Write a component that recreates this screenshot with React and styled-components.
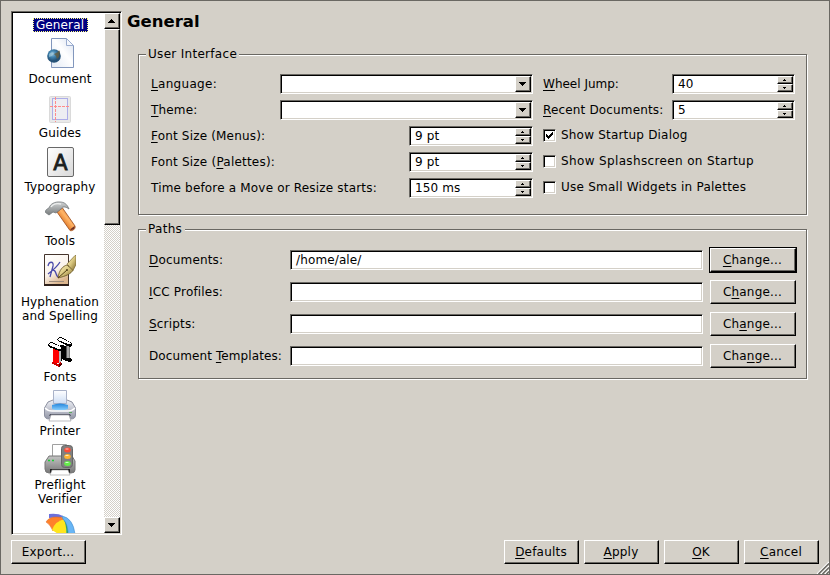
import React from 'react';
import styled, { createGlobalStyle, css } from 'styled-components';

const face = '#d4d0c8';
const shade = '#6a6863';

const Global = createGlobalStyle`
  * { box-sizing: border-box; }
  body { margin: 0; background: ${face}; }
  button, input { font: inherit; letter-spacing: inherit; color: inherit; }
  u {
    text-decoration: underline 1px;
    text-underline-offset: 2px;
    text-decoration-skip-ink: none;
  }
`;

const sunken = css`
  border: 1px solid;
  border-color: ${shade} #fff #fff ${shade};
  box-shadow: inset 1px 1px 0 #000, inset -1px -1px 0 ${face};
`;

const raised = css`
  background: ${face};
  border: 1px solid;
  border-color: #fff #000 #000 #fff;
  box-shadow: inset -1px -1px 0 ${shade};
`;

const Dialog = styled.div`
  position: relative;
  display: flex;
  flex-direction: column;
  width: 830px;
  height: 575px;
  padding: 10px;
  gap: 5px;
  border: 1px solid ${shade};
  background: ${face};
  color: #000;
  font: 12px/14px 'DejaVu Sans', sans-serif;
  letter-spacing: 0.13px;
  white-space: nowrap;
  overflow: hidden;
`;

const Body = styled.div`
  display: flex;
  height: 524px;
  gap: 5px;
`;

const Sidebar = styled.div`
  ${sunken}
  display: flex;
  width: 111px;
  padding: 1px;
  background: #fff;
`;

const SectionList = styled.div`
  flex: 1;
  display: flex;
  flex-direction: column;
  align-items: center;
  gap: 6px;
  padding: 5px 0 0 3px;
  overflow: hidden;
`;

const Section = styled.div`
  display: flex;
  flex-direction: column;
  align-items: center;
  flex: none;
  gap: ${(p) => p.$gap || 2}px;
  margin-bottom: ${(p) => p.$after || 0}px;
  text-align: center;
  svg { display: block; }
`;

const Selected = styled.span`
  flex: none;
  width: 55px;
  height: 14px;
  line-height: 14px;
  text-align: center;
  background: #000080;
  color: #fff;
  outline: 1px dotted #ffff7f;
  outline-offset: -1px;
`;

const Scrollbar = styled.div`
  display: flex;
  flex-direction: column;
  width: 16px;
  background: repeating-conic-gradient(${face} 0 25%, #fff 0 50%) 0 0 / 2px 2px;
`;

const ScrollButton = styled.div`
  ${raised}
  display: flex;
  align-items: center;
  justify-content: center;
  height: 16px;
  padding-right: 1px;
`;

const Thumb = styled.div`
  ${raised}
  height: 196px;
`;

const Spacer = styled.div`
  flex: 1;
`;

const Main = styled.main`
  flex: 1;
  display: flex;
  flex-direction: column;
`;

const Title = styled.h1`
  margin: 0;
  height: 43px;
  padding-top: 1px;
  font-size: 16.5px;
  line-height: 20px;
  font-weight: bold;
  letter-spacing: 0;
`;

const Group = styled.section`
  width: 669px;
  height: ${(p) => p.$height}px;
  margin: 0 0 14px 11px;
  padding: 0 0 0 ${(p) => p.$inset}px;
  border: 1px solid ${shade};
  box-shadow: inset 1px 1px 0 #fff, 1px 1px 0 #fff;
`;

const Legend = styled.h2`
  width: ${(p) => p.$width}px;
  height: 14px;
  margin: -8px 0 ${(p) => p.$gap}px ${(p) => p.$shift}px;
  padding-left: 2px;
  background: ${face};
  font: inherit;
  letter-spacing: 0.3px;
`;

const Columns = styled.div`
  display: grid;
  grid-template-columns: 382px 252px;
  column-gap: 10px;
`;

const Rows = styled.div`
  display: flex;
  flex-direction: column;
  gap: 6px;
`;

const Row = styled.div`
  display: flex;
  align-items: center;
  justify-content: space-between;
  height: 20px;
`;

const Label = styled.label`
  letter-spacing: ${(p) => p.$track ?? 0.18}px;
`;

const Field = styled.div`
  ${sunken}
  display: flex;
  justify-content: space-between;
  width: ${(p) => p.$width}px;
  height: 20px;
  padding: 1px 1px 1px 5px;
  line-height: 17px;
  background: #fff;
`;

const DropButton = styled.div`
  ${raised}
  display: flex;
  align-items: center;
  justify-content: center;
  width: 16px;
  height: 16px;
  padding-right: 1px;
`;

const Stepper = styled.div`
  display: flex;
  flex-direction: column;
  width: 16px;
  height: 16px;
`;

const Step = styled.div`
  ${raised}
  display: flex;
  align-items: center;
  justify-content: center;
  height: 8px;
  padding-right: 1px;
`;

const CheckRow = styled.label`
  display: flex;
  align-items: center;
  gap: 5px;
  height: 20px;
  padding-bottom: 1px;
  letter-spacing: ${(p) => p.$track ?? 0.2}px;
`;

const CheckText = styled.span`
  margin-bottom: 1px;
`;

const CheckBox = styled.span`
  ${sunken}
  width: 13px;
  height: 13px;
  background: #fff;
  svg { display: block; margin: 2px; }
`;

const PathGrid = styled.div`
  display: grid;
  grid-template-columns: 141px 413px 86px;
  grid-auto-rows: 24px;
  row-gap: 8px;
  align-items: center;
`;

const PathButtonCell = styled.div`
  margin-left: 7px;
`;

const Button = styled.button`
  ${raised}
  width: ${(p) => p.$width || 75}px;
  height: 24px;
  padding: 0 1px 1px 0;
  line-height: 14px;
  letter-spacing: 0.2px;
  ${(p) => p.$default && css`
    box-shadow: inset -1px -1px 0 ${shade}, 0 0 0 1px #000;
  `}
`;

const Footer = styled.footer`
  display: flex;
  justify-content: space-between;
`;

const Actions = styled.div`
  display: flex;
  gap: 5px;
`;

const SizeGrip = styled.svg`
  position: absolute;
  right: 0;
  bottom: 0;
`;

const Arrow = ({ up }) => (
  <svg width="7" height="4" shapeRendering="crispEdges">
    <path d={up ? 'M3 0h1v1h1v1h1v1h1v1H0V3h1V2h1V1h1z' : 'M0 0h7v1H6v1H5v1H4v1H3V3H2V2H1V1H0z'} />
  </svg>
);

const Tick = ({ up }) => (
  <svg width="3" height="2" shapeRendering="crispEdges">
    <path d={up ? 'M1 0h1v1h1v1H0V1h1z' : 'M0 0h3v1H2v1H1V1H0z'} />
  </svg>
);

const CheckMark = () => (
  <svg width="7" height="7" shapeRendering="crispEdges">
    <path d="M0 2h1v1h1v1h1V3h1V2h1V1h1V0h1v3H6v1H5v1H4v1H3v1H2V6H1V5H0z" />
  </svg>
);

const Spin = ({ value, width }) => (
  <Field $width={width}>
    {value}
    <Stepper>
      <Step><Tick up /></Step>
      <Step><Tick /></Step>
    </Stepper>
  </Field>
);

const Combo = () => (
  <Field $width={253}>
    <span />
    <DropButton><Arrow /></DropButton>
  </Field>
);

const Icon = ({ children }) => <svg width="32" height="32" viewBox="0 0 32 32">{children}</svg>;

const DocumentIcon = () => (
  <Icon>
    <defs>
      <linearGradient id="sheet" x1="0" y1="1" x2="1" y2="0">
        <stop offset="0" stopColor="#e2eaf5" /><stop offset=".55" stopColor="#fff" /><stop offset="1" stopColor="#d7e0ef" />
      </linearGradient>
      <radialGradient id="globe" cx=".4" cy=".35">
        <stop offset="0" stopColor="#8fc0dc" /><stop offset=".5" stopColor="#3f82ae" /><stop offset="1" stopColor="#255277" />
      </radialGradient>
    </defs>
    <path d="M7.500 .5h15l7 7v22h-22z" fill="url(#sheet)" stroke="#8297bd" />
    <path d="M22.500 .5v7h7z" fill="#f4f7fc" stroke="#9badd0" />
    <circle cx="10" cy="18" r="6.800" fill="url(#globe)" />
    <path d="M10 16l4-2 1-2 1 2-1 5-2 2-1-3z" fill="#655d3d" opacity=".8" />
    <path d="M5 16q3-3 5-1l-2 3-3 1z" fill="#a7cddb" opacity=".65" />
  </Icon>
);

const GuidesIcon = () => (
  <Icon>
    <rect x="5.500" y="4.500" width="21" height="26" rx="1" fill="#e9e9e9" stroke="#dadada" />
    <rect x="8.500" y="6.500" width="15" height="21" fill="#ededf2" stroke="#adade8" />
    <path d="M11.500 5v25M6 14.500h20" stroke="#ff8b8b" strokeDasharray="3 1" fill="none" />
  </Icon>
);

const TypographyIcon = () => (
  <Icon>
    <defs>
      <linearGradient id="tile" x2="1" y2="1"><stop stopColor="#fff" /><stop offset="1" stopColor="#d8d8d8" /></linearGradient>
    </defs>
    <rect x="3.500" y="1.500" width="26" height="29" rx="1.500" fill="url(#tile)" stroke="#686868" />
    <text x="16.500" y="24" textAnchor="middle" fontFamily="DejaVu Sans" fontSize="21" fill="#1b1e20" stroke="#1b1e20" strokeWidth=".8" letterSpacing="0">A</text>
  </Icon>
);

const ToolsIcon = () => (
  <Icon>
    <defs>
      <linearGradient id="handle" x1="0" y1="1" x2="1" y2="0"><stop offset=".3" stopColor="#d96b18" /><stop offset=".55" stopColor="#ffb466" /><stop offset="1" stopColor="#c9560d" /></linearGradient>
      <linearGradient id="steel" x2="0" y2="1"><stop stopColor="#d0d3d4" /><stop offset="1" stopColor="#777b7c" /></linearGradient>
    </defs>
    <path d="M13 12l5.500-4L31 26c1 3-3 5.500-5 4.500z" fill="url(#handle)" stroke="#9a4a1a" strokeWidth=".8" />
    <path d="M26 29.500l4.500-3.500c1 2.500-2 5-4.500 3.500z" fill="#6d2f24" />
    <path d="M1.500 12.500C1 10 3 9 5 8c1-4 6-6.500 11-6 4 0 7 2 9 7-4-3-7-2.500-8 0l-5 4-3-1-4 3z" fill="url(#steel)" stroke="#74797b" strokeWidth=".8" />
    <path d="M7 7c2-3 6-4 10-3" fill="none" stroke="#eceeee" strokeWidth="1.300" />
  </Icon>
);

const HyphenationIcon = () => (
  <Icon>
    <defs>
      <linearGradient id="paper" x2=".5" y2="1"><stop stopColor="#fff" /><stop offset=".6" stopColor="#faf3eb" /><stop offset="1" stopColor="#dcb68e" /></linearGradient>
      <linearGradient id="nib" x2="1" y2="1"><stop stopColor="#fff4c0" /><stop offset=".5" stopColor="#d8c67e" /><stop offset="1" stopColor="#7d672c" /></linearGradient>
    </defs>
    <path d="M.5 .5h24v30H.5z" fill="url(#paper)" stroke="#45352d" />
    <path d="M0 31h25" stroke="#2f211b" strokeWidth="2" />
    <path d="M4 12c1-5 6-5 5 0L6 23M16 8C13 13 8 17 4 20M9 16c4 0 2 7 6 7" fill="none" stroke="#4a4aaa" strokeWidth="1.300" />
    <path d="M5 27.500h15" stroke="#9d8c7c" />
    <path d="M14 24c1-8 5-12 9-13l6 5c-2 4-7 6-15 8z" fill="url(#nib)" stroke="#65521f" strokeWidth=".8" />
    <path d="M23 10l8-8.500h1v9l-3 6z" fill="url(#nib)" stroke="#7b6930" strokeWidth=".7" />
    <path d="M14 24l9-8" stroke="#514018" />
    <circle cx="23" cy="16" r="1" fill="#54431b" />
  </Icon>
);

const FontsIcon = () => (
  <Icon>
    <g shapeRendering="crispEdges">
      <path d="M16 9h2l4 1v12h-4l-1-3z" fill="#000" />
      <path d="M22 9h3v13h-3z" fill="#aaa" stroke="#000" strokeWidth=".5" />
      <path d="M18 20l4 2h4l2 1v2l-3 1-7-3z" fill="#000" />
      <path d="M13 3l2-2h2l11 6v3l-2 1-12-6z" fill="#000" />
      <path d="M15 2h2l10 5v1h-3L14 4z" fill="#fff" />
      <path d="M9 11l6 3v13h-6z" fill="#f00" />
      <path d="M15 13h2v13l-2 1z" fill="#b9b9b9" />
      <path d="M17 14h1v11h-1z" fill="#000" />
      <path d="M8 26l7 2 1-2 2 1v2l-3 2-8-4z" fill="#d00000" />
      <path d="M15 28l3-1v2l-3 2z" fill="#500" />
      <path d="M4 8l2-2h2l10 5v4h-3L5 11z" fill="#000" />
      <path d="M6 7h2l9 4v2h-3L5 9z" fill="#fff" />
    </g>
  </Icon>
);

const PrinterIcon = () => (
  <Icon>
    <defs>
      <linearGradient id="body" x2="0" y2="1"><stop stopColor="#eef0f6" /><stop offset="1" stopColor="#9296a6" /></linearGradient>
      <linearGradient id="feed" x2="0" y2="1"><stop stopColor="#fff" /><stop offset="1" stopColor="#cdddf4" /></linearGradient>
      <linearGradient id="glow" x2="0" y2="1"><stop stopColor="#2485dc" /><stop offset="1" stopColor="#8cd2ff" /></linearGradient>
    </defs>
    <path d="M4 12l5-2h14l5 2 3.500 6v7q0 4-5 4h-21q-5 0-5-4v-7z" fill="url(#body)" stroke="#8c90a0" />
    <path d="M9.500 .5h13v13h-13z" fill="url(#feed)" stroke="#a9b2c8" />
    <path d="M8 15q8-3 16 0v4q-8 3-16 0z" fill="url(#glow)" />
    <path d="M1 18q3 3 7 3h16q4 0 7-3" fill="none" stroke="#fff" strokeWidth="1.500" />
    <path d="M6 24h20l1 2H5z" fill="#4d5060" />
    <path d="M7 25h18l2 6H5z" fill="#fff" stroke="#a0a0a8" strokeWidth=".7" />
    <path d="M25 22.500h3" stroke="#5ca75d" />
  </Icon>
);

const PreflightIcon = () => (
  <Icon>
    <defs>
      <linearGradient id="case" x2="0" y2="1"><stop stopColor="#c4c4c4" /><stop offset="1" stopColor="#777" /></linearGradient>
    </defs>
    <path d="M8.500 .5h14v14h-14z" fill="#fff" stroke="#a0a0a0" />
    <path d="M5 12h23l3 5v9q0 3-4 3H5q-4 0-4-4v-7z" fill="url(#case)" stroke="#777" />
    <path d="M6 25h20v4H6z" fill="#222" />
    <path d="M8 26h16l2 5H6z" fill="#fff" stroke="#999" strokeWidth=".6" />
    <path d="M4 16.500h2m2 0h2" stroke="#19cf32" strokeWidth="1.600" />
    <rect x="17.500" y="1.500" width="11" height="22" rx="3" fill="#808080" stroke="#666" />
    <ellipse cx="23.500" cy="6" rx="3.300" ry="2.500" fill="#ff4b35" />
    <ellipse cx="23.500" cy="12.500" rx="3.300" ry="2.500" fill="#ffb431" />
    <ellipse cx="23.500" cy="19.500" rx="3.300" ry="2.500" fill="#65ed4a" />
    <path d="M21.500 5h3m-3 6.500h3m-3 7h3" stroke="#fff" opacity=".7" />
  </Icon>
);

const ColorIcon = () => (
  <Icon>
    <path d="M5 2q9-1 14 2l-3 3q-6-2-11-1z" fill="#6c70dd" />
    <path d="M2 10Q5 5 12 5q8 0 9 2Q12 10 9 19 6 12 2 10z" fill="#ff812b" stroke="#d86722" strokeWidth=".5" />
    <path d="M8 18Q11 9 21 7q2 8 1 20z" fill="#ffe51d" />
    <path d="M20 6q5 6 4 20h-2q1-12-2-18z" fill="#39a852" />
    <path d="M18 4q11 2 13 18l-7 4q1-13-5-19z" fill="#69b6f5" stroke="#3e89cc" strokeWidth=".6" />
  </Icon>
);

const sections = [
  { icon: DocumentIcon, text: ['Document'] },
  { icon: GuidesIcon, text: ['Guides'] },
  { icon: TypographyIcon, text: ['Typography'] },
  { icon: ToolsIcon, text: ['Tools'] },
  { icon: HyphenationIcon, text: ['Hyphenation', 'and Spelling'], gap: 9, after: 7 },
  { icon: FontsIcon, text: ['Fonts'] },
  { icon: PrinterIcon, text: ['Printer'] },
  { icon: PreflightIcon, text: ['Preflight', 'Verifier'] },
  { icon: ColorIcon, text: [] },
];

export default function App() {
  return (
    <Dialog>
      <Global />
      <Body>
        <Sidebar>
          <SectionList>
            <Selected>General</Selected>
            {sections.map(({ icon: Glyph, text, gap, after }, i) => (
              <Section key={i} $gap={gap} $after={after}>
                <Glyph />
                <div>{text.map((line) => <div key={line}>{line}</div>)}</div>
              </Section>
            ))}
          </SectionList>
          <Scrollbar>
            <ScrollButton><Arrow up /></ScrollButton>
            <Thumb />
            <Spacer />
            <ScrollButton><Arrow /></ScrollButton>
          </Scrollbar>
        </Sidebar>
        <Main>
          <Title>General</Title>
          <Group $height={161} $inset={12}>
            <Legend $width={93} $shift={-5} $gap={13}>User Interface</Legend>
            <Columns>
              <Rows>
                <Row><Label $track={0.3}><u>L</u>anguage:</Label><Combo /></Row>
                <Row><Label><u>T</u>heme:</Label><Combo /></Row>
                <Row><Label><u>F</u>ont Size (Menus):</Label><Spin value="9 pt" width={124} /></Row>
                <Row><Label $track={0.21}>Font Size (<u>P</u>alettes):</Label><Spin value="9 pt" width={124} /></Row>
                <Row><Label>Time before a Move or Resize starts:</Label><Spin value="150 ms" width={124} /></Row>
              </Rows>
              <Rows>
                <Row><Label $track={0}><u>W</u>heel Jump:</Label><Spin value="40" width={123} /></Row>
                <Row><Label $track={0.16}><u>R</u>ecent Documents:</Label><Spin value="5" width={123} /></Row>
                <CheckRow><CheckBox><CheckMark /></CheckBox><CheckText>Show Startup Dialog</CheckText></CheckRow>
                <CheckRow $track={0.36}><CheckBox /><CheckText>Show Splashscreen on Startup</CheckText></CheckRow>
                <CheckRow $track={0.24}><CheckBox /><CheckText>Use Small Widgets in Palettes</CheckText></CheckRow>
              </Rows>
            </Columns>
          </Group>
          <Group $height={150} $inset={10}>
            <Legend $width={39} $shift={-3} $gap={12}>Paths</Legend>
            <PathGrid>
              <Label><u>D</u>ocuments:</Label>
              <Field $width={413}>/home/ale/</Field>
              <PathButtonCell><Button $width={86} $default><u>C</u>hange...</Button></PathButtonCell>
              <Label><u>I</u>CC Profiles:</Label>
              <Field $width={413} />
              <PathButtonCell><Button $width={86}>C<u>h</u>ange...</Button></PathButtonCell>
              <Label><u>S</u>cripts:</Label>
              <Field $width={413} />
              <PathButtonCell><Button $width={86}>Ch<u>a</u>nge...</Button></PathButtonCell>
              <Label $track={0.1}>Document <u>T</u>emplates:</Label>
              <Field $width={413} />
              <PathButtonCell><Button $width={86}>Cha<u>n</u>ge...</Button></PathButtonCell>
            </PathGrid>
          </Group>
        </Main>
      </Body>
      <Footer>
        <Button>Export...</Button>
        <Actions>
          <Button><u>D</u>efaults</Button>
          <Button><u>A</u>pply</Button>
          <Button><u>O</u>K</Button>
          <Button><u>C</u>ancel</Button>
        </Actions>
      </Footer>
      <SizeGrip width="13" height="13">
        <path d="M1 13L13 1M5 13l8-8M9 13l4-4" stroke="#fff" strokeWidth="1.200" />
        <path d="M2.500 13L13 2.500M6.500 13L13 6.500M10.500 13l2.500-2.500" stroke={shade} strokeWidth="1.500" />
      </SizeGrip>
    </Dialog>
  );
}
